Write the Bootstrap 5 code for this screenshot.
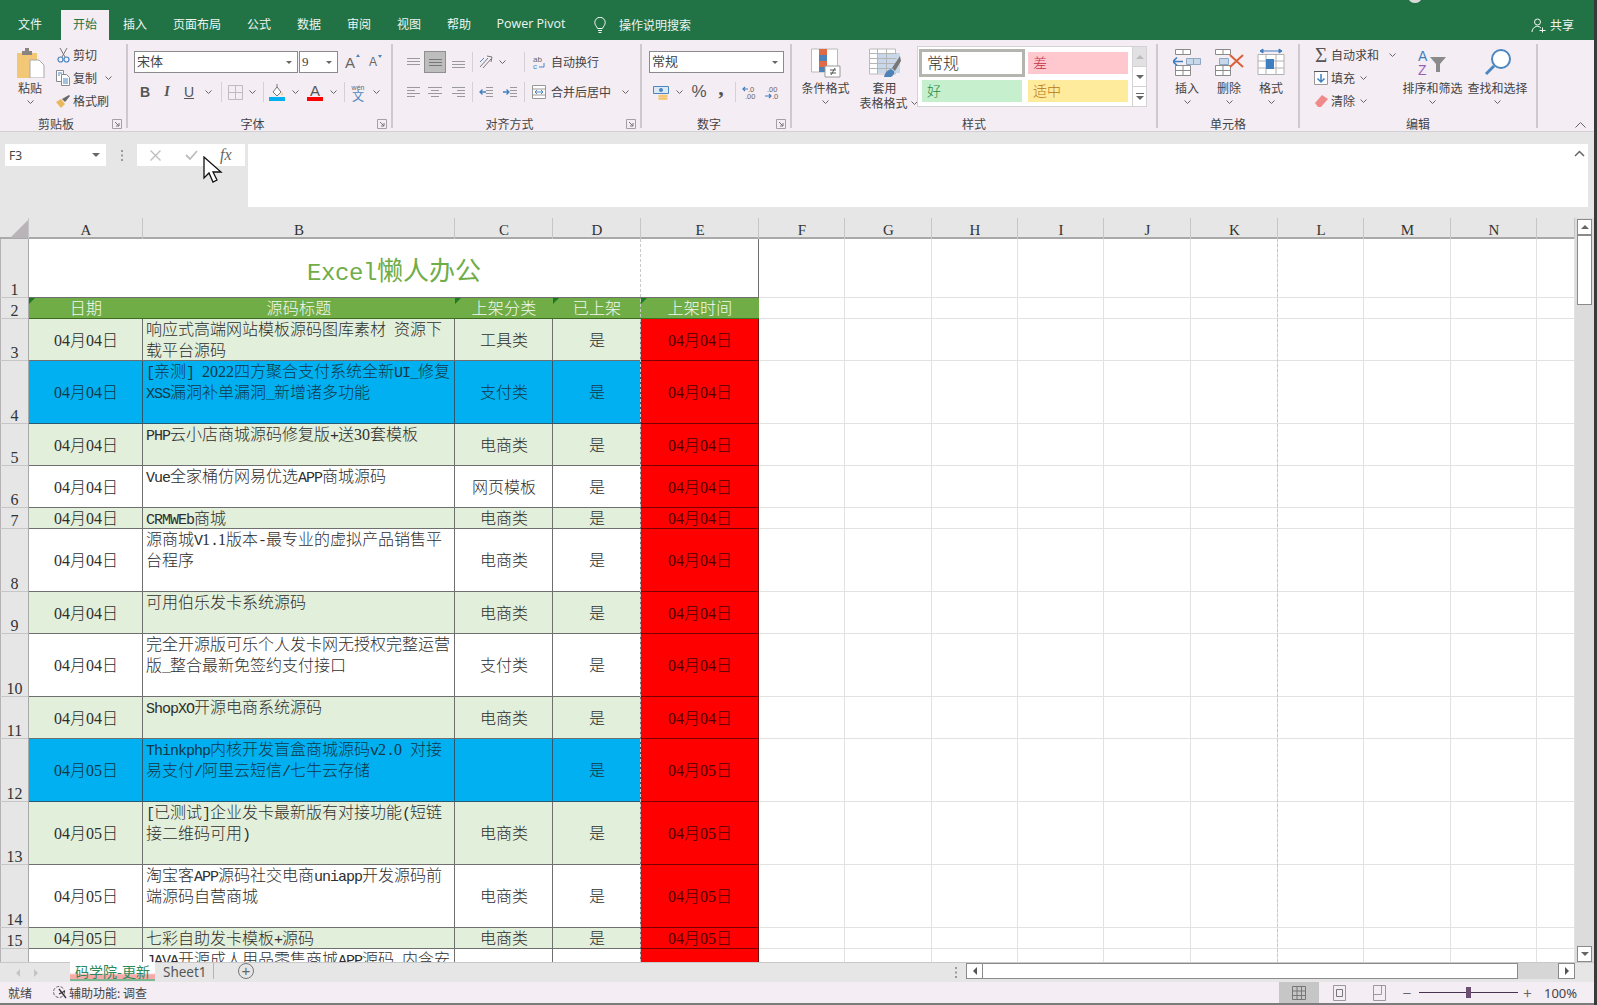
<!DOCTYPE html>
<html lang="zh-CN">
<head>
    <meta charset="UTF-8">
    <meta name="viewport" content="width=device-width, initial-scale=1.0">
    <title>Excel懒人办公</title>
    <link href="https://cdn.jsdelivr.net/npm/bootstrap@5.3.2/dist/css/bootstrap.min.css" rel="stylesheet">
    <style>
        html, body { height: 100%; overflow: hidden; background: #3a3a3a; }
        body { font-family: "Noto Sans CJK SC", "Noto Sans", sans-serif; font-size: 12px; color: #444; line-height: 16px; }
        .app { width: 1594px; height: 1005px; position: relative; background: #e6e6e6; }

        /* Titelleiste */
        .xl-top { height: 40px; background: #217346; color: #eef5f0; padding-top: 10px; padding-left: 6px; flex: none; }
        .xl-tab { width: 48px; height: 30px; line-height: 28px; text-align: center; margin-right: 2px; flex: none; }
        .xl-tab.wide { width: 72px; }
        .xl-tab.pp { width: 92px; font-family: "Open Sans", sans-serif; font-size: 12.5px; }
        .xl-tab.first { margin-right: 7px; }
        .xl-tab.on { background: #f4edf4; color: #217346; margin-right: 2px; }
        .xl-search { margin-left: 15px; line-height: 28px; gap: 13px; }
        .xl-share { margin-left: auto; margin-right: 20px; line-height: 28px; gap: 4px; }
        .top-dot { position: absolute; left: 1409px; top: -5px; width: 12px; height: 8px; background: #d9d9d9; border-radius: 50%; }

        /* Ribbon */
        .rb { height: 92px; background: #f4edf4; flex: none; border-bottom: 1px solid #d2d0d2; }
        .rb-grp { height: 91px; padding-top: 4px; flex: none; display: flex; flex-direction: column; }
        .rb-body { height: 72px; flex: none; display: flex; }
        .rb-lbl { height: 16px; display: flex; align-items: center; }
        .rb-lbl b { font-weight: 400; flex-grow: 1; text-align: center; }
        .launch { width: 14px; flex: none; display: flex; }
        .rb-sep { width: 2px; height: 84px; margin-top: 4px; background: #cdcacd; flex: none; }
        .g-clip { width: 126px; } .g-font { width: 263px; } .g-align { width: 247px; } .g-num { width: 148px; }
        .g-style { width: 364px; } .g-cell { width: 140px; } .g-edit { width: 236px; }
        .rb-rows { padding-top: 7px; display: flex; flex-direction: column; gap: 8px; }
        .pad-font { padding-left: 6px; } .pad-align { padding-left: 10px; } .pad-num { padding-left: 7px; }
        .rb-row { height: 22px; display: flex; align-items: center; white-space: nowrap; }
        .slot { display: flex; align-items: center; justify-content: center; flex: none; height: 22px; }
        .vbar { width: 1px; height: 20px; background: #d4d0d4; }
        .slot.picked { background: #bdbdbd; border: 1px solid #8f8f8f; }
        .wd4{width:4px}.wd8{width:8px}.wd10{width:10px}.wd12{width:12px}.wd14{width:14px}.wd16{width:16px}.wd17{width:17px}
        .wd18{width:18px}.wd20{width:20px}.wd21{width:21px}.wd22{width:22px}.wd23{width:23px}.wd24{width:24px}.wd25{width:25px}.wd26{width:26px}.wd28{width:28px}
        .chv { width: 7px; height: 4px; display: block; flex: none; }
        .combo { height: 22px; background: #fff; border: 1px solid #8b8b8b; display: flex; align-items: center; justify-content: space-between; padding: 0 5px 0 2px; flex: none; font-family: "Liberation Serif", "Noto Sans CJK SC", serif; font-size: 13px; }
        .combo.c-name { width: 164px; } .combo.c-size { width: 39px; margin-left: 1px; } .combo.c-fmt { width: 135px; }
        .tri { width: 0; height: 0; border-left: 3px solid transparent; border-right: 3px solid transparent; border-top: 3px solid #666; }
        .fmt-b { font: 700 14px "Liberation Sans", sans-serif; color: #555; }
        .fmt-i { font: italic 700 14px "Liberation Serif", serif; color: #555; }
        .fmt-u { font: 400 14px "Liberation Sans", sans-serif; color: #555; text-decoration: underline; }
        .sz-a { font: 400 15px "Liberation Sans", sans-serif; color: #666; position: relative; }
        .sz-a.s { font-size: 12px; }
        .sz-a i { position: absolute; right: -5px; top: 0; width: 0; height: 0; border-left: 2px solid transparent; border-right: 2px solid transparent; border-bottom: 3px solid #4a86c0; }
        .sz-a.s i { border-bottom: 0; border-top: 3px solid #4a86c0; }
        .txt-pct { font: 400 17px "Liberation Sans", sans-serif; color: #555; }
        .txt-cma { font: 700 22px "Liberation Serif", serif; color: #555; line-height: 14px; margin-top: -8px; }
        .wen { display: flex; flex-direction: column; align-items: center; line-height: 9px; color: #4a86c0; font-size: 12px; }
        .wen small { font: 400 7px "Liberation Sans", sans-serif; color: #666; }
        .clip-btns { margin-left: 14px; width: 32px; }
        .big { display: flex; flex-direction: column; align-items: center; flex: none; padding-top: 4px; }
        .big .ic { height: 30px; flex: none; display: flex; align-items: flex-start; justify-content: center; }
        .big .cap { margin-top: 2px; line-height: 15px; text-align: center; white-space: nowrap; }
        .big .chv { margin-top: 5px; }
        .big .capchv { display: flex; align-items: center; gap: 3px; margin: 0 0 0 8px; }
        .big .capchv .chv { margin-top: 0; }
        .st-col { width: 59px; } .cell-b { width: 42px; } .ed-b { width: 65px; }
        .mini { display: flex; flex-direction: column; gap: 3px; padding-top: 1px; }
        .mini-row { height: 20px; display: flex; align-items: center; white-space: nowrap; }
        .mini-ic { width: 18px; margin-right: 1px; display: flex; justify-content: center; flex: none; }
        .mini-chv { margin-left: 5px; }
        .edit-l { width: 84px; margin-right: 4px; }
        .cap-sig { font: 400 21px "Liberation Serif", serif; color: #555; line-height: 20px; }
        .gal { width: 230px; height: 61px; margin: 2px 0 0 3px; background: #fff; border: 1px solid #d5d2d5; display: flex; flex: none; }
        .gal-cells { display: grid; grid-template-columns: 106px 100px; grid-template-rows: 28px 22px; column-gap: 3px; row-gap: 3px; padding: 2px 4px 0 1px; font-family: "Noto Sans CJK SC", serif; font-size: 14px; font-weight: 300; }
        .gal-cells > div { padding-left: 5px; line-height: 20px; }
        .st-norm { border: 3px solid #b5b5b0; background: #fff; color: #333; font-size: 16px; padding-left: 5px !important; }
        .st-bad { background: #ffc7ce; color: #c4304b; align-self: center; height: 22px; }
        .st-good { background: #c6efce; color: #2a8a3e; margin: 0 3px; }
        .st-mid { background: #ffeb9c; color: #b8761a; }
        .gal-btns { width: 15px; border-left: 1px solid #d5d2d5; display: flex; flex-direction: column; margin-left: auto; }
        .gal-btns div { flex: 1; display: flex; align-items: center; justify-content: center; border-bottom: 1px solid #d5d2d5; }
        .gal-btns div:first-child { background: #e3e0e3; }
        .gal-btns div:last-child { border-bottom: 0; }
        .gal-btns .tri-up { border-bottom-color: #bbb; }
        .rb-end { flex-grow: 1; display: flex; justify-content: flex-end; align-items: flex-end; padding: 0 8px 3px 0; }

        /* Bearbeitungsleiste */
        .fx-bar { height: 86px; padding: 12px 6px 11px 5px; flex: none; }
        .fx-name { width: 101px; height: 22px; background: #fff; padding: 0 6px 0 4px; font: 400 12px "Noto Sans", sans-serif; flex: none; }
        .fx-grip { width: 31px; height: 22px; flex: none; }
        .fx-tools { width: 108px; height: 22px; background: #fff; flex: none; font: italic 400 16px "Liberation Serif", serif; color: #666; }
        .ft-x { margin-left: 11px; } .ft-ok { margin-left: 18px; } .ft-fn { margin-left: 18px; }
        .fx-input { height: 63px; margin-left: 3px; background: #fff; flex-grow: 1; padding: 6px 3px 0 0; }
        .mouse { position: absolute; left: 203px; top: 156px; width: 20px; height: 28px; }

        /* Tabelle */
        .sheet-wrap { height: 744px; flex: none; overflow: hidden; position: relative; }
        .sheet-holder { width: 1575px; flex: none; position: relative; overflow: hidden; background: #fff; }
        .sheet { table-layout: fixed; width: 1575px; border-collapse: separate; border-spacing: 0; font-family: "Liberation Serif", "Noto Sans CJK SC", serif; font-size: 16px; line-height: 21px; color: #2e2e2e; font-weight: 300; }
        .sheet td, .sheet th { padding: 0; font-weight: 300; text-align: center; vertical-align: middle; white-space: nowrap; box-shadow: inset -1px -1px 0 #e2e2e2; overflow: hidden; }
        .sheet .lat { font-family: "Liberation Mono", monospace; font-size: 15px; letter-spacing: -1px; line-height: 0; }
        .sheet th.hc { height: 21px; padding-top: 3px; background: #e6e6e6; box-shadow: inset -1px 0 0 #c6c6c6, inset 0 -2px 0 #a9a9a9; font-size: 15px; line-height: 15px; color: #333; }
        .sheet .rh { background: #e6e6e6; vertical-align: bottom; line-height: 17px; color: #333; box-shadow: inset -1px 0 0 #a9a9a9, inset 0 -1px 0 #c6c6c6, inset 1px 0 0 #b5b1b5; }
        .sheet .dt { box-shadow: inset -1px -1px 0 #6f6f6f; position: relative; line-height: 20px; padding-top: 1px; }
        .sheet .tt { text-align: left; vertical-align: top; padding-left: 3px; line-height: 20.5px; }
        .sheet .tt.one { line-height: 20px; }
        .sheet .top-title { color: #70ad47; font-size: 26px; font-weight: 400; vertical-align: middle; background: #fff; box-shadow: inset -1px -1px 0 #6f6f6f; padding-top: 6px; }
        .sheet .top-title .lat { font-size: 24px; letter-spacing: -.4px; }
        .sheet .hd { background: #70ad47; color: #f4f8f0; box-shadow: inset 0 -1px 0 #3c6b22; position: relative; letter-spacing: .2px; }
        .sheet .hd.flag::before { content: ""; position: absolute; left: 0; top: 0; border-top: 6px solid #1e7a22; border-right: 6px solid transparent; }
        .sheet .bg-g { background: #e2efda; }
        .sheet .bg-b { background: #00b0f0; color: #12384a; box-shadow: inset -1px -1px 0 #2a5a72; }
        .sheet .bg-r { background: #ff0000; color: #4a0000; box-shadow: inset -1px -1px 0 #7a0000; }
        .pg-break { position: absolute; top: 21px; bottom: 0; width: 0; border-left: 1px dashed #c9c9c9; }
        .pg-break.p1 { left: 640px; }
        .pg-break.p2 { left: 1277px; }
        .corner-tri { position: absolute; left: 10px; top: 2px; }

        /* Bildlaufleisten */
        .vscroll { width: 19px; background: #dcdcdc; flex: none; display: flex; flex-direction: column; padding: 1px 2px 0 2px; }
        .sb-btn { background: #fff; border: 1px solid #8a8a8a; flex: none; display: flex; align-items: center; justify-content: center; }
        .vscroll .sb-btn { height: 16px; }
        .vscroll .sb-thumb { height: 70px; background: #fff; border: 1px solid #8a8a8a; flex: none; }
        .tri-up { width: 0; height: 0; border-left: 4px solid transparent; border-right: 4px solid transparent; border-bottom: 4px solid #666; }
        .tri-dn { width: 0; height: 0; border-left: 4px solid transparent; border-right: 4px solid transparent; border-top: 4px solid #666; }
        .tri-lf { width: 0; height: 0; border-top: 4px solid transparent; border-bottom: 4px solid transparent; border-right: 4px solid #555; }
        .tri-rt { width: 0; height: 0; border-top: 4px solid transparent; border-bottom: 4px solid transparent; border-left: 4px solid #555; }

        /* Blattregister */
        .tabs { height: 20px; flex: none; background: #e6e6e6; border-top: 1px solid #c9c9c9; }
        .tab-nav { width: 70px; padding-left: 16px; gap: 14px; flex: none; }
        .tab-nav .tri-lf, .tab-nav .tri-rt { border-right-color: #c4c4c4; border-left-color: #c4c4c4; }
        .tab-on { width: 85px; height: 19px; margin-top: -1px; flex: none; text-align: center; font-size: 14px; line-height: 18px; color: #2a8a5a; background: linear-gradient(#fff 0, #fff 58%, #f7a8a8 68%, #f7a8a8 90%, #7fb894 90%); }
        .tab-off { width: 58px; flex: none; padding-left: 8px; font: 400 13.5px "Noto Sans", sans-serif; line-height: 18px; color: #555; }
        .tab-line { width: 1px; height: 16px; background: #b5b5b5; flex: none; }
        .tab-add { width: 16px; height: 16px; margin-left: 24px; border: 1px solid #777; border-radius: 50%; color: #666; flex: none; font: 400 15px/13px "Liberation Sans", sans-serif; text-align: center; }
        .h-grip { margin-left: auto; width: 11px; flex: none; }
        .hscroll { width: 609px; height: 16px; flex: none; background: #d6d6d6; display: flex; margin-right: 19px; }
        .hscroll .sb-btn { width: 17px; }
        .hscroll .sb-thumb { width: 535px; background: #fff; border: 1px solid #8a8a8a; border-left: 0; }

        /* Statusleiste */
        .stat { height: 23px; flex: none; background: #f4edf4; border-bottom: 2px solid #7c7c7c; padding-left: 8px; font-size: 12px; }
        .stat-acc { margin-left: 20px; gap: 1px; }
        .view-on { margin-left: auto; width: 40px; height: 21px; background: #c6c6c6; flex: none; }
        .view-b { width: 40px; height: 21px; flex: none; }
        .zoom-m { width: 16px; text-align: center; color: #666; font-size: 15px; flex: none; }
        .zoom-t { width: 99px; height: 1px; background: #4a3350; position: relative; flex: none; margin: 0 4px; }
        .zoom-k { position: absolute; left: 47px; top: -5px; width: 5px; height: 11px; background: #6a4f70; }
        .zoom-p { width: 11px; text-align: center; color: #666; font-size: 15px; flex: none; }
        .zoom-v { width: 61px; padding-left: 11px; font: 400 13px "Noto Sans", sans-serif; flex: none; }
    </style>
</head>
<body>
    <!-- wiederkehrende Symbole -->
    <svg width="0" height="0" class="d-block">
        <symbol id="i-chv" viewBox="0 0 7 4"><path d="M.5.5 3.5 3.500 6.500.5" fill="none" stroke="#666"/></symbol>
        <symbol id="i-launch" viewBox="0 0 10 10"><path d="M.5 9.500V.5h9v9z" fill="none" stroke="#a5a0a5"/><path d="M3 3l4 4M7 4v3H4" fill="none" stroke="#777"/></symbol>
    </svg>

    <div class="app d-flex flex-column">
        <!-- Titelleiste mit Registern -->
        <div class="xl-top d-flex">
            <div class="xl-tab first">文件</div>
            <div class="xl-tab on">开始</div>
            <div class="xl-tab">插入</div>
            <div class="xl-tab wide">页面布局</div>
            <div class="xl-tab">公式</div>
            <div class="xl-tab">数据</div>
            <div class="xl-tab">审阅</div>
            <div class="xl-tab">视图</div>
            <div class="xl-tab">帮助</div>
            <div class="xl-tab pp">Power Pivot</div>
            <div class="xl-search d-flex align-items-center">
                <svg width="12" height="17" viewBox="0 0 12 17"><path d="M3.500 11.500C2.500 9 .8 8 .8 5.500a5.200 5.200 0 0 1 10.400 0c0 2.500-1.700 3.500-2.700 6zM4 13.500h4M4.500 15.500h3" fill="none" stroke="#f2f7f3"/></svg>
                <span>操作说明搜索</span>
            </div>
            <div class="xl-share d-flex align-items-center">
                <svg width="15" height="15" viewBox="0 0 15 15"><path d="M3.500 4a3 3 0 1 0 6 0 3 3 0 1 0-6 0M1 14c0-3 2-5 5-6 1.500.3 3 1 4 2M8.500 12.500h6M11.500 9.500v5" fill="none" stroke="#f2f7f3"/></svg>
                <span>共享</span>
            </div>
        </div>
        <div class="top-dot"></div>

        <!-- Ribbon -->
        <div class="rb d-flex">
            <!-- Zwischenablage -->
            <div class="rb-grp g-clip">
                <div class="rb-body">
                    <div class="big clip-btns">
                        <div class="ic">
                            <svg width="29" height="30" viewBox="0 0 29 30"><path d="M1 5h20v25H1z" fill="#f2c877"/><path d="M6 3h3V0h4v3h3v4H6z" fill="#8a8480"/><path d="M14 12h9l5 5v13H14z" fill="#fff" stroke="#a8a8a8"/></svg>
                        </div>
                        <div class="cap">粘贴</div>
                        <svg class="chv"><use href="#i-chv"/></svg>
                    </div>
                    <div class="mini ms-2">
                        <div class="mini-row"><span class="mini-ic"><svg width="13" height="15" viewBox="0 0 13 15"><path d="M3 0l5 9M10 0 5 9" stroke="#777" fill="none"/><circle cx="3.500" cy="11.500" r="2.500" fill="none" stroke="#4a86c0" stroke-width="1.200"/><circle cx="9.500" cy="11.500" r="2.500" fill="none" stroke="#4a86c0" stroke-width="1.200"/></svg></span>剪切</div>
                        <div class="mini-row"><span class="mini-ic"><svg width="14" height="16" viewBox="0 0 14 16"><path d="M.5.500h7v11h-7z" fill="#fff" stroke="#8a8a8a"/><path d="M5.500 4.500h5l3 3v8h-8z" fill="#fff" stroke="#8a8a8a"/><path d="M7 9h5M7 11h5M7 13h5M2 3h4M2 5h2" stroke="#4a86c0"/></svg></span>复制<svg class="chv ms-2"><use href="#i-chv"/></svg></div>
                        <div class="mini-row"><span class="mini-ic"><svg width="14" height="13" viewBox="0 0 14 13"><path d="M0 7l5-3 4 5-4 4z" fill="#e8b85a"/><path d="M6 4l7-4 1 1-5 6z" fill="#666"/></svg></span>格式刷</div>
                    </div>
                </div>
                <div class="rb-lbl"><b>剪贴板</b><span class="launch"><svg width="10" height="10"><use href="#i-launch"/></svg></span></div>
            </div>
            <div class="rb-sep"></div>

            <!-- Schrift -->
            <div class="rb-grp g-font">
                <div class="rb-body rb-rows pad-font">
                    <div class="rb-row">
                        <div class="combo c-name"><span>宋体</span><span class="tri"></span></div>
                        <div class="combo c-size"><span>9</span><span class="tri"></span></div>
                        <div class="slot wd24"><span class="sz-a">A<i></i></span></div>
                        <div class="slot wd22"><span class="sz-a s">A<i></i></span></div>
                    </div>
                    <div class="rb-row">
                        <div class="slot wd22"><span class="fmt-b">B</span></div>
                        <div class="slot wd22"><span class="fmt-i">I</span></div>
                        <div class="slot wd22"><span class="fmt-u">U</span></div>
                        <div class="slot wd17"><svg class="chv"><use href="#i-chv"/></svg></div>
                        <div class="slot wd8"><span class="vbar"></span></div>
                        <div class="slot wd20"><svg width="15" height="15" viewBox="0 0 15 15"><path d="M.5.500h14v14H.5zM7.500.500v14M.5 7.500h14" fill="none" stroke="#bdbdbd"/></svg></div>
                        <div class="slot wd14"><svg class="chv"><use href="#i-chv"/></svg></div>
                        <div class="slot wd8"><span class="vbar"></span></div>
                        <div class="slot wd20"><svg width="16" height="17" viewBox="0 0 16 17"><path d="M4 8l4-5 4 5-4 4z" fill="#fff" stroke="#777"/><path d="M8 0v4" stroke="#777"/><path d="M13 8c1 2 1.500 3 0 3.500C12 11 12 10 13 8z" fill="#f2c877"/><path d="M0 13h16v4H0z" fill="#00b0f0"/></svg></div>
                        <div class="slot wd16"><svg class="chv"><use href="#i-chv"/></svg></div>
                        <div class="slot wd24"><svg width="16" height="17" viewBox="0 0 16 17"><text x="8" y="12" text-anchor="middle" font-family="Liberation Sans" font-size="15" fill="#555">A</text><path d="M0 13h16v4H0z" fill="#f00"/></svg></div>
                        <div class="slot wd12"><svg class="chv"><use href="#i-chv"/></svg></div>
                        <div class="slot wd10"><span class="vbar"></span></div>
                        <div class="slot wd18"><span class="wen"><small>wén</small>文</span></div>
                        <div class="slot wd18"><svg class="chv"><use href="#i-chv"/></svg></div>
                    </div>
                </div>
                <div class="rb-lbl"><b>字体</b><span class="launch"><svg width="10" height="10"><use href="#i-launch"/></svg></span></div>
            </div>
            <div class="rb-sep"></div>

            <!-- Ausrichtung -->
            <div class="rb-grp g-align">
                <div class="rb-body rb-rows">
                    <div class="rb-row pad-align">
                        <div class="slot wd21"><svg width="13" height="9" viewBox="0 0 13 9"><path d="M0 .5h13M0 3.500h13M0 6.500h13" stroke="#9a9a9a"/></svg></div>
                        <div class="slot wd22 picked"><svg width="13" height="9" viewBox="0 0 13 9"><path d="M0 1.500h13M0 4.500h13M0 7.500h13" stroke="#777"/></svg></div>
                        <div class="slot wd24"><svg width="13" height="12" viewBox="0 0 13 12"><path d="M0 5.500h13M0 8.500h13M0 11.500h13" stroke="#9a9a9a"/></svg></div>
                        <div class="slot wd4"><span class="vbar"></span></div>
                        <div class="slot wd24"><svg width="14" height="14" viewBox="0 0 14 14"><path d="M1 12 9 3M4 13l8-9M8 1l5 1-1 5" fill="none" stroke="#777"/><path d="M1 7l4-4" stroke="#4a86c0"/></svg></div>
                        <div class="slot wd8"><svg class="chv"><use href="#i-chv"/></svg></div>
                        <div class="slot wd16"></div>
                        <div class="slot wd4"><span class="vbar"></span></div>
                        <div class="slot wd25"><svg width="12" height="15" viewBox="0 0 12 15"><text x="0" y="7" font-family="Liberation Sans" font-size="8" fill="#666">ab</text><text x="0" y="14" font-family="Liberation Sans" font-size="8" fill="#4a86c0">c</text><path d="M11 8v4H6" fill="none" stroke="#4a86c0"/></svg></div>
                        <span>自动换行</span>
                    </div>
                    <div class="rb-row pad-align">
                        <div class="slot wd21"><svg width="13" height="13" viewBox="0 0 13 13"><path d="M0 1.500h13M0 4.500h8M0 7.500h13M0 10.500h8" stroke="#9a9a9a"/></svg></div>
                        <div class="slot wd22"><svg width="14" height="13" viewBox="0 0 14 13"><path d="M0 1.500h14M3 4.500h8M0 7.500h14M3 10.500h8" stroke="#9a9a9a"/></svg></div>
                        <div class="slot wd24"><svg width="13" height="13" viewBox="0 0 13 13"><path d="M0 1.500h13M5 4.500h8M0 7.500h13M5 10.500h8" stroke="#9a9a9a"/></svg></div>
                        <div class="slot wd4"><span class="vbar"></span></div>
                        <div class="slot wd24"><svg width="14" height="13" viewBox="0 0 14 13"><path d="M7 1.500h7M7 4.500h7M7 7.500h7M7 10.500h7" stroke="#9a9a9a"/><path d="M1 6h6M3.500 3.500 1 6l2.500 2.500" fill="none" stroke="#3f7fc0" stroke-width="1.300"/></svg></div>
                        <div class="slot wd24"><svg width="14" height="13" viewBox="0 0 14 13"><path d="M7 1.500h7M7 4.500h7M7 7.500h7M7 10.500h7" stroke="#9a9a9a"/><path d="M0 6h6M3.500 3.500 6 6 3.500 8.500" fill="none" stroke="#3f7fc0" stroke-width="1.300"/></svg></div>
                        <div class="slot wd4"><span class="vbar"></span></div>
                        <div class="slot wd25"><svg width="14" height="14" viewBox="0 0 14 14"><path d="M.5.500h13v13H.5zM.5 4h13M.5 10h13" fill="#fff" stroke="#999"/><path d="M3 7h8M3 7l2-2M3 7l2 2M11 7 9 5M11 7 9 9" fill="none" stroke="#4a86c0"/></svg></div>
                        <span>合并后居中</span>
                        <div class="slot wd28"><svg class="chv"><use href="#i-chv"/></svg></div>
                    </div>
                </div>
                <div class="rb-lbl"><b>对齐方式</b><span class="launch"><svg width="10" height="10"><use href="#i-launch"/></svg></span></div>
            </div>
            <div class="rb-sep"></div>

            <!-- Zahl -->
            <div class="rb-grp g-num">
                <div class="rb-body rb-rows pad-num">
                    <div class="rb-row"><div class="combo c-fmt"><span>常规</span><span class="tri"></span></div></div>
                    <div class="rb-row">
                        <div class="slot wd23"><svg width="16" height="15" viewBox="0 0 16 15"><path d="M.5 1.500h15v7H.5z" fill="#dce8f4" stroke="#4a86c0"/><circle cx="8" cy="5" r="2" fill="#4a86c0"/><ellipse cx="10" cy="11" rx="5" ry="1.500" fill="#f2c877"/><ellipse cx="10" cy="13.500" rx="5" ry="1.500" fill="#f2c877"/></svg></div>
                        <div class="slot wd14"><svg class="chv"><use href="#i-chv"/></svg></div>
                        <div class="slot wd26"><span class="txt-pct">%</span></div>
                        <div class="slot wd18"><span class="txt-cma">,</span></div>
                        <div class="slot wd10"><span class="vbar"></span></div>
                        <div class="slot wd20"><svg width="16" height="15" viewBox="0 0 16 15"><text x="6" y="6.500" font-family="Liberation Sans" font-size="7.500" fill="#666">.0</text><text x="3" y="14" font-family="Liberation Sans" font-size="7.500" fill="#666">.00</text><path d="M6 4H1M3 2 1 4l2 2" fill="none" stroke="#3f7fc0" stroke-width="1.200"/></svg></div>
                        <div class="slot wd24"><svg width="16" height="15" viewBox="0 0 16 15"><text x="3" y="6.500" font-family="Liberation Sans" font-size="7.500" fill="#666">.00</text><text x="8" y="14" font-family="Liberation Sans" font-size="7.500" fill="#666">.0</text><path d="M1 11h6M5 9l2 2-2 2" fill="none" stroke="#3f7fc0" stroke-width="1.200"/></svg></div>
                    </div>
                </div>
                <div class="rb-lbl"><b>数字</b><span class="launch"><svg width="10" height="10"><use href="#i-launch"/></svg></span></div>
            </div>
            <div class="rb-sep"></div>

            <!-- Formatvorlagen -->
            <div class="rb-grp g-style">
                <div class="rb-body">
                    <div class="big ms-1 st-col">
                        <div class="ic"><svg width="30" height="30" viewBox="0 0 30 30"><path d="M.5 1h26v23H.5z" fill="#fff" stroke="#bbb"/><path d="M8 1h8v6H8zM8 13h8v6H8z" fill="#e06a45"/><path d="M8 7h8v6H8zM8 19h8v5H8z" fill="#4f82b8"/><path d="M14 18h15v11H14z" fill="#fff" stroke="#999"/><path d="M19 22h6M19 25h6M24 20l-4 7" stroke="#555" fill="none"/></svg></div>
                        <div class="cap">条件格式</div>
                        <svg class="chv"><use href="#i-chv"/></svg>
                    </div>
                    <div class="big st-col">
                        <div class="ic"><svg width="32" height="30" viewBox="0 0 32 30"><path d="M.5 1h26v25H.5z" fill="#fff" stroke="#bbb"/><path d="M8 5h23v20H8z" fill="#c8d8ea"/><path d="M.5 5.500h27M.5 10.500h27M.5 15.500h27M.5 20.500h27M8.500 1v25M17.500 1v25" stroke="#b5b5b5" fill="none"/><path d="M31 8 23 20l3 3 6-10z" fill="#777"/><path d="M22 21c-3 1-6 3-7 8h7c3-2 4-4 3-6z" fill="#4f82b8"/></svg></div>
                        <div class="cap">套用</div>
                        <div class="cap capchv"><span>表格格式</span><svg class="chv"><use href="#i-chv"/></svg></div>
                    </div>
                    <div class="gal">
                        <div class="gal-cells">
                            <div class="st-norm">常规</div>
                            <div class="st-bad">差</div>
                            <div class="st-good">好</div>
                            <div class="st-mid">适中</div>
                        </div>
                        <div class="gal-btns">
                            <div><span class="tri-up"></span></div>
                            <div><span class="tri-dn"></span></div>
                            <div><svg width="8" height="7" viewBox="0 0 8 7"><path d="M0 .5h8" stroke="#666"/><path d="M0 3h8L4 7z" fill="#666"/></svg></div>
                        </div>
                    </div>
                </div>
                <div class="rb-lbl"><b>样式</b></div>
            </div>
            <div class="rb-sep"></div>

            <!-- Zellen -->
            <div class="rb-grp g-cell">
                <div class="rb-body ps-2">
                    <div class="big cell-b">
                        <div class="ic"><svg width="28" height="28" viewBox="0 0 28 28"><path d="M2.500 1.500h15v5h-15zM2.500 17.500h15v10h-15zM10 17.500v10M2.500 22.500h15M10 1.500v5" fill="#fff" stroke="#8a8a8a"/><path d="M13.500 10.500h14v6h-14zM20.500 10.500v6" fill="#c6d8ea" stroke="#8fa9c4"/><path d="M0 13.500h10M4 9.500l-4 4 4 4" fill="none" stroke="#3f7fc0" stroke-width="1.600"/></svg></div>
                        <div class="cap">插入</div>
                        <svg class="chv"><use href="#i-chv"/></svg>
                    </div>
                    <div class="big cell-b">
                        <div class="ic"><svg width="30" height="28" viewBox="0 0 30 28"><path d="M1.500 1.500h15v5h-15zM1.500 17.500h15v10h-15zM9 17.500v10M1.500 22.500h15M9 1.500v5" fill="#fff" stroke="#8a8a8a"/><path d="M5.500 10.500h9v6h-9z" fill="#c6d8ea" stroke="#8fa9c4"/><path d="M16 7l13 12M29 7 16 19" stroke="#d9603a" stroke-width="2"/></svg></div>
                        <div class="cap">删除</div>
                        <svg class="chv"><use href="#i-chv"/></svg>
                    </div>
                    <div class="big cell-b">
                        <div class="ic"><svg width="28" height="30" viewBox="0 0 28 30"><path d="M1 6.500h26v20H1zM9 6.500v20M19 6.500v20M1 13h26M1 20h26" fill="#fff" stroke="#b0b0b0"/><path d="M9 11h8v10H9z" fill="#3f7fc0"/><path d="M3 3h22M3 3l3-2v4zM25 3l-3-2v4z" stroke="#3f7fc0" fill="#3f7fc0"/></svg></div>
                        <div class="cap">格式</div>
                        <svg class="chv"><use href="#i-chv"/></svg>
                    </div>
                </div>
                <div class="rb-lbl"><b>单元格</b></div>
            </div>
            <div class="rb-sep"></div>

            <!-- Bearbeiten -->
            <div class="rb-grp g-edit">
                <div class="rb-body ps-2">
                    <div class="mini ms-1 edit-l">
                        <div class="mini-row"><span class="mini-ic cap-sig">Σ</span>自动求和<svg class="chv ms-auto"><use href="#i-chv"/></svg></div>
                        <div class="mini-row"><span class="mini-ic"><svg width="14" height="14" viewBox="0 0 14 14"><path d="M.5.500h13v13H.5z" fill="#fff" stroke="#999"/><path d="M0 .5h14" stroke="#555"/><path d="M7 3v8M3.500 7.500 7 11l3.500-3.500" fill="none" stroke="#3f7fc0" stroke-width="1.500"/></svg></span>填充<svg class="chv mini-chv"><use href="#i-chv"/></svg></div>
                        <div class="mini-row"><span class="mini-ic"><svg width="13" height="12" viewBox="0 0 13 12"><path d="M0 8l7-8 6 4-7 8H3z" fill="#f08a8a"/></svg></span>清除<svg class="chv mini-chv"><use href="#i-chv"/></svg></div>
                    </div>
                    <div class="big ed-b">
                        <div class="ic"><svg width="30" height="30" viewBox="0 0 30 30"><text x="0" y="13" font-family="Liberation Sans" font-size="14" fill="#3f7fc0">A</text><text x="0" y="27" font-family="Liberation Sans" font-size="14" fill="#9a5fb5">Z</text><path d="M12 9h16l-6 7v8h-4v-8z" fill="#8a8a8a"/></svg></div>
                        <div class="cap">排序和筛选</div>
                        <svg class="chv"><use href="#i-chv"/></svg>
                    </div>
                    <div class="big ed-b">
                        <div class="ic"><svg width="28" height="28" viewBox="0 0 28 28"><circle cx="17" cy="11" r="9" fill="#fff" stroke="#4a86c0" stroke-width="2"/><path d="M10 18 2 26" stroke="#4a86c0" stroke-width="3"/></svg></div>
                        <div class="cap">查找和选择</div>
                        <svg class="chv"><use href="#i-chv"/></svg>
                    </div>
                </div>
                <div class="rb-lbl"><b>编辑</b></div>
            </div>
            <div class="rb-sep"></div>
            <div class="rb-end"><svg width="11" height="6" viewBox="0 0 11 6"><path d="M.5 5.500 5.500.5l5 5" fill="none" stroke="#666"/></svg></div>
        </div>

        <!-- Bearbeitungsleiste -->
        <div class="fx-bar d-flex align-items-start">
            <div class="fx-name d-flex align-items-center justify-content-between"><span>F3</span><span class="tri-dn"></span></div>
            <div class="fx-grip d-flex align-items-center justify-content-center"><svg width="2" height="11" viewBox="0 0 2 11"><path d="M0 0h2v2H0zM0 4.500h2v2H0zM0 9h2v2H0z" fill="#999"/></svg></div>
            <div class="fx-tools d-flex align-items-center">
                <span class="slot wd14 ft-x"><svg width="11" height="11" viewBox="0 0 11 11"><path d="M.5.500l10 10M10.500.5l-10 10" stroke="#bdbdbd" stroke-width="1.300"/></svg></span>
                <span class="slot wd22 ft-ok"><svg width="13" height="10" viewBox="0 0 13 10"><path d="M1 5l4 4 7-8" fill="none" stroke="#bdbdbd" stroke-width="1.800"/></svg></span>
                <span class="ft-fn">fx</span>
            </div>
            <div class="fx-input d-flex justify-content-end"><svg width="11" height="7" viewBox="0 0 11 7"><path d="M1 6l4.500-4.500L10 6" fill="none" stroke="#666" stroke-width="1.500"/></svg></div>
        </div>
        <svg class="mouse" viewBox="0 0 20 28"><path d="M1 1v21l5-5 4 9 4-2-4-8h8z" fill="#fff" stroke="#111" stroke-width="1.300"/></svg>

        <!-- Tabellenblatt -->
        <div class="sheet-wrap d-flex">
            <div class="sheet-holder">
                <table class="sheet" id="sheet"></table>
                <div class="pg-break p1"></div>
                <div class="pg-break p2"></div>
                <svg class="corner-tri" width="18" height="18" viewBox="0 0 18 18"><path d="M18 0v18H0z" fill="#b8b4b8"/></svg>
            </div>
            <div class="vscroll">
                <div class="sb-btn"><span class="tri-up"></span></div>
                <div class="sb-thumb"></div>
                <div class="flex-grow-1"></div>
                <div class="sb-btn"><span class="tri-dn"></span></div>
            </div>
        </div>

        <!-- Blattregister -->
        <div class="tabs d-flex">
            <div class="tab-nav d-flex align-items-center"><span class="tri-lf"></span><span class="tri-rt"></span></div>
            <div class="tab-on">码学院-更新</div>
            <div class="tab-off">Sheet1</div>
            <div class="tab-line"></div>
            <div class="tab-add">+</div>
            <div class="h-grip d-flex align-items-center"><svg width="2" height="11" viewBox="0 0 2 11"><path d="M0 0h2v2H0zM0 4.500h2v2H0zM0 9h2v2H0z" fill="#999"/></svg></div>
            <div class="hscroll">
                <div class="sb-btn"><span class="tri-lf"></span></div>
                <div class="sb-thumb"></div>
                <div class="flex-grow-1"></div>
                <div class="sb-btn"><span class="tri-rt"></span></div>
            </div>
        </div>

        <!-- Statusleiste -->
        <div class="stat d-flex align-items-center">
            <span>就绪</span>
            <span class="stat-acc d-flex align-items-center">
                <svg width="16" height="15" viewBox="0 0 16 15"><circle cx="7" cy="7" r="5.500" fill="none" stroke="#666" stroke-dasharray="3 1.500"/><path d="M7 4l7 9M7 9l6-3" stroke="#333" stroke-width="1.300"/></svg>
                <span>辅助功能: 调查</span>
            </span>
            <div class="view-on d-flex align-items-center justify-content-center"><svg width="14" height="14" viewBox="0 0 14 14"><path d="M.5.500h13v13H.5zM.5 5h13M.5 9.500h13M5 .5v13M9.500.5v13" fill="none" stroke="#777"/></svg></div>
            <div class="view-b d-flex align-items-center justify-content-center"><svg width="13" height="16" viewBox="0 0 13 16"><path d="M.5.500h12v15H.5z" fill="none" stroke="#999"/><path d="M3.500 4.500h6v7h-6z" fill="none" stroke="#777"/></svg></div>
            <div class="view-b d-flex align-items-center justify-content-center"><svg width="13" height="16" viewBox="0 0 13 16"><path d="M.5.500h12v15H.5zM.5 9.500h8V.5" fill="none" stroke="#999"/></svg></div>
            <div class="zoom-m">−</div>
            <div class="zoom-t"><span class="zoom-k"></span></div>
            <div class="zoom-p">+</div>
            <div class="zoom-v">100%</div>
        </div>
    </div>

    <script src="https://cdn.jsdelivr.net/npm/bootstrap@5.3.2/dist/js/bootstrap.bundle.min.js"></script>
    <script>
        // Spaltenbreiten aus dem Bild, erste Spalte ist der Zeilenkopf
        const cols = [29, 114, 312, 98, 88, 118, 86, 87, 86, 86, 87, 87, 86, 87, 86, 38];
        const letters = ['A','B','C','D','E','F','G','H','I','J','K','L','M','N',''];
        const blanks = 10; // leere Spalten F bis O

        // [Zeile, Höhe, Titel, Kategorie, Datum, Hintergrund]
        const rows = [
            [3, 42, '响应式高端网站模板源码图库素材 资源下<br>载平台源码', '工具类', '04月04日', 'bg-g'],
            [4, 63, '[亲测] 2022四方聚合支付系统全新UI_修复<br>XSS漏洞补单漏洞_新增诸多功能', '支付类', '04月04日', 'bg-b'],
            [5, 42, 'PHP云小店商城源码修复版+送30套模板', '电商类', '04月04日', 'bg-g'],
            [6, 42, 'Vue全家桶仿网易优选APP商城源码', '网页模板', '04月04日', ''],
            [7, 21, 'CRMWEb商城', '电商类', '04月04日', 'bg-g'],
            [8, 63, '源商城V1.1版本-最专业的虚拟产品销售平<br>台程序', '电商类', '04月04日', ''],
            [9, 42, '可用伯乐发卡系统源码', '电商类', '04月04日', 'bg-g'],
            [10, 63, '完全开源版可乐个人发卡网无授权完整运营<br>版_整合最新免签约支付接口', '支付类', '04月04日', ''],
            [11, 42, 'ShopXO开源电商系统源码', '电商类', '04月04日', 'bg-g'],
            [12, 63, 'Thinkphp内核开发盲盒商城源码v2.0 对接<br>易支付/阿里云短信/七牛云存储', '', '04月05日', 'bg-b'],
            [13, 63, '[已测试]企业发卡最新版有对接功能(短链<br>接二维码可用)', '电商类', '04月05日', 'bg-g'],
            [14, 63, '淘宝客APP源码社交电商uniapp开发源码前<br>端源码自营商城', '电商类', '04月05日', ''],
            [15, 21, '七彩自助发卡模板+源码', '电商类', '04月05日', 'bg-g'],
            ['', 63, 'JAVA开源成人用品零售商城APP源码 内含安', '', '', '']
        ];

        // halbe Breite wie bei SimSun: lateinische Zeichen in eigene Spans, Ziffern passen schon
        function lat(text) {
            return text.split('<br>').map(part => part.replace(/[\x20-\x2f\x3a-\x7e]+/g, m => `<span class="lat">${m}</span>`)).join('<br>');
        }

        const emptyCells = '<td></td>'.repeat(blanks);
        let html = '<colgroup>' + cols.map(w => `<col style="width:${w}px">`).join('') + '</colgroup>';
        html += '<tr><th class="hc"></th>' + letters.map(l => `<th class="hc">${l}</th>`).join('') + '</tr>';
        html += `<tr style="height:59px"><td class="rh">1</td><td colspan="5" class="top-title">${lat('Excel')}懒人办公</td>${emptyCells}</tr>`;
        html += `<tr style="height:21px"><td class="rh">2</td><td class="hd flag">日期</td><td class="hd">源码标题</td><td class="hd flag">上架分类</td><td class="hd flag">已上架</td><td class="hd flag">上架时间</td>${emptyCells}</tr>`;
        rows.forEach(r => {
            const [no, h, title, cat, date, bg] = r;
            html += `<tr style="height:${h}px">
                <td class="rh">${no}</td>
                <td class="dt ${bg}">${lat(date)}</td>
                <td class="dt tt ${h === 21 ? 'one' : ''} ${bg}">${lat(title)}</td>
                <td class="dt ${bg}">${cat}</td>
                <td class="dt ${bg}">${no === '' ? '' : '是'}</td>
                <td class="dt bg-r">${lat(date)}</td>
                ${emptyCells}
            </tr>`;
        });
        document.getElementById('sheet').innerHTML = html;
    </script>
</body>
</html>
